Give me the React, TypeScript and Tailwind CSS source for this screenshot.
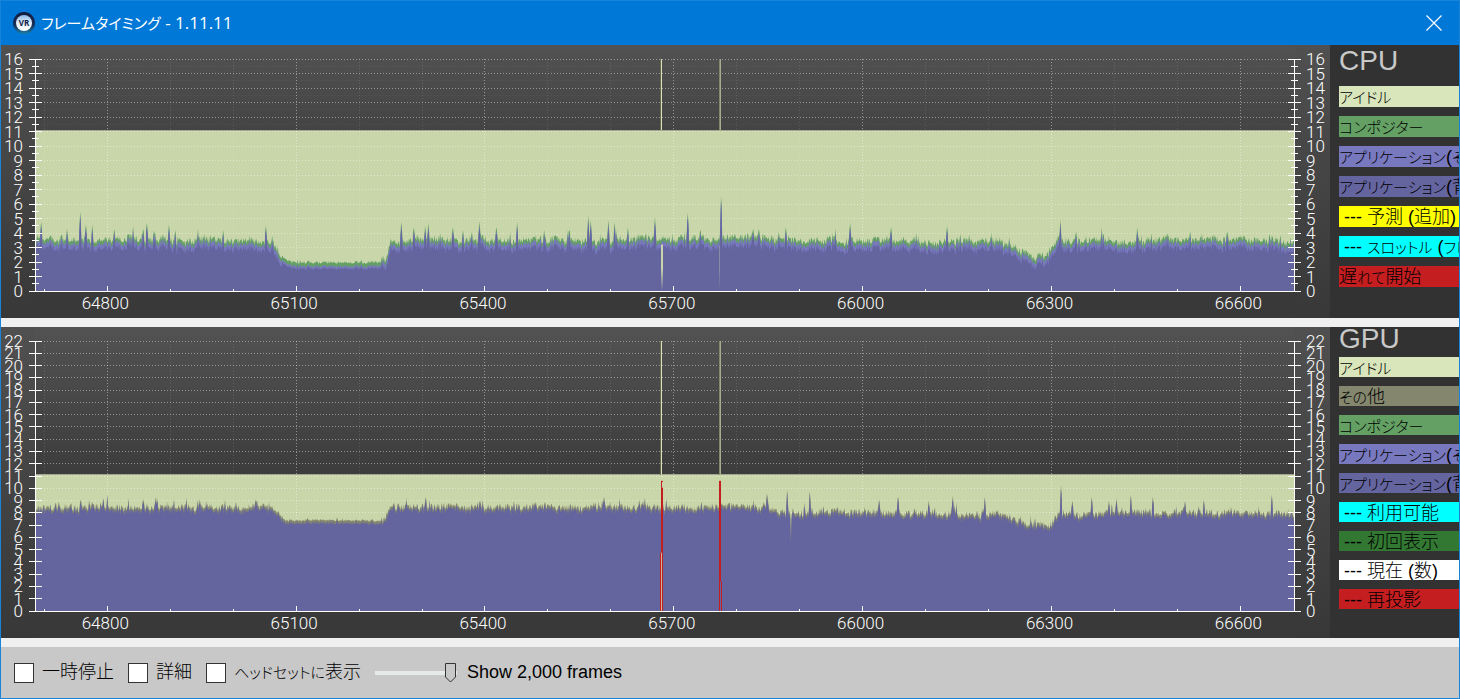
import { useEffect, useRef, useState } from "react";

type Point = [number, number];

interface LegendItem {
  label: string;
  className: string;
}

interface Marker {
  frame: number;
  split: number;
}

interface ChartProps {
  id: string;
  title: string;
  max: number;
  top: number;
  bottom: number;
  minorTicks: boolean;
  layers: { color: string; values: number[] }[];
  markers?: Marker[];
  gaps?: { frame: number; from: number; width: number; opacity: number }[];
}

const FIRST_FRAME = 64686;
const FRAMES = 2000;
const BUDGET = 11.1;

const cpuBase: Point[] = [
  [0, 3.5], [376, 3.5], [388, 2.45], [400, 2.1], [410, 1.98], [545, 1.98], [556, 2.3], [564, 3.5],
  [1065, 3.5], [1130, 3.7], [1180, 3.5], [1250, 3.35], [1548, 3.35], [1565, 2.6], [1598, 2.3],
  [1612, 2.6], [1625, 3.4], [1750, 3.4], [1850, 3.55], [2000, 3.45],
];

const cpuSpikes: Point[] = [
  [9, 4.8], [50, 4.3], [71, 5.5], [80, 4.6], [90, 4.6], [125, 4.3], [171, 4.3], [177, 4.7], [188, 4.2],
  [212, 4.6], [222, 4.2], [298, 4.2], [366, 4.5], [581, 4.8], [601, 4.4], [619, 4.5], [624, 4.7],
  [663, 4.4], [679, 4.2], [705, 4.8], [732, 4.4], [765, 4.8], [808, 4.2], [848, 4.2], [878, 5.2],
  [882, 4.9], [910, 4.9], [920, 4.7], [941, 4.4], [984, 5.1], [1036, 5.4], [1056, 4.2], [1089, 6.6],
  [1140, 4.3], [1149, 4.3], [1192, 4.4], [1294, 4.7], [1359, 4.4], [1448, 4.5], [1628, 4.9],
  [1653, 4.1], [1750, 4.4], [1834, 4.1], [1893, 4.1],
];

const gpuBase: Point[] = [
  [0, 8.45], [378, 8.45], [395, 7.4], [552, 7.35], [565, 8.5], [1150, 8.45], [1162, 8.6], [1175, 8],
  [1530, 7.9], [1570, 7.15], [1612, 7.05], [1625, 7.9], [1850, 8], [2000, 7.9],
];

const gpuSpikes: Point[] = [
  [37, 8.9], [72, 9], [90, 8.9], [171, 9.1], [193, 9.2], [261, 9.1], [350, 9.1], [620, 9.3], [706, 9],
  [903, 9.3], [1162, 9.6], [1194, 9.9], [1200, 5.6], [1230, 9.8], [1340, 9.1], [1370, 9.3], [1419, 9],
  [1457, 9.4], [1508, 9.3], [1629, 10.3], [1647, 9], [1678, 9.3], [1705, 9], [1717, 9.2], [1740, 9.5],
  [1775, 9.3], [1826, 9], [1856, 9.1], [1964, 9.5],
];

function envelope(points: Point[], frame: number) {
  for (let i = 1; i < points.length; i++) {
    const [x0, y0] = points[i - 1];
    const [x1, y1] = points[i];
    if (frame <= x1) return y0 + ((y1 - y0) * (frame - x0)) / (x1 - x0);
  }
  return points[points.length - 1][1];
}

const isCalm = (frame: number) => frame > 392 && frame < 552;

function buildSeries(base: Point[], spikes: Point[], jitter: number, wander: number, quiet: number, seed: number) {
  let state = seed;
  const rand = () => {
    state = (state * 1664525 + 1013904223) % 4294967296;
    return state / 4294967296;
  };
  const values: number[] = [];
  let drift = 0;
  for (let i = 0; i <= FRAMES; i++) {
    drift = drift * 0.9 + (rand() - 0.5) * wander;
    const calm = isCalm(i) ? quiet : 1;
    const kick = rand() > 0.94 ? rand() * jitter * 1.3 : 0;
    values.push(envelope(base, i) + (drift + (rand() - 0.5) * jitter + kick) * calm);
  }
  spikes.forEach(([frame, value]) => {
    const isDrop = value < values[frame];
    values[frame] = value;
    if (isDrop) return;
    values[frame + 1] = (value * 2 + values[frame + 1]) / 3;
    values[frame - 1] = (value + values[frame - 1]) / 2;
  });
  return values;
}

const cpuTotal = buildSeries(cpuBase, cpuSpikes, 0.5, 0.16, 0.4, 7);
const cpuApp = cpuTotal.map((v, i) => v - 0.3 + (i % 3) * 0.04);
const cpuScene = cpuTotal.map((v, i) => (v > 4 || isCalm(i) ? v - 0.42 : v - 0.52 - (i % 2) * 0.12));
const gpuTotal = buildSeries(gpuBase, gpuSpikes, 0.6, 0.1, 0.3, 21);
const gpuScene = gpuTotal.map((v, i) => v - 0.14 - (i % 2) * 0.2);

const cpuLegend: LegendItem[] = [
  { label: "アイドル", className: "bg-[#d9e6bb]" },
  { label: "コンポジター", className: "bg-[#64a064]" },
  { label: "アプリケーション(その他)", className: "bg-[#7878be]" },
  { label: "アプリケーション(背景)", className: "bg-[#64649f]" },
  { label: " --- 予測 (追加)", className: "bg-[#ffff00]" },
  { label: " --- スロットル (フレーム)", className: "bg-[#00ffff]" },
  { label: "遅れて開始", className: "bg-[#c41e20]" },
];

const gpuLegend: LegendItem[] = [
  { label: "アイドル", className: "bg-[#d9e6bb]" },
  { label: "その他", className: "bg-[#84876e]" },
  { label: "コンポジター", className: "bg-[#64a064]" },
  { label: "アプリケーション(その他)", className: "bg-[#7878be]" },
  { label: "アプリケーション(背景)", className: "bg-[#64649f]" },
  { label: " --- 利用可能", className: "bg-[#00ffff]" },
  { label: " --- 初回表示", className: "bg-[#327832]" },
  { label: " --- 現在 (数)", className: "bg-white" },
  { label: " --- 再投影", className: "bg-[#c41e20]" },
];

// kana are set smaller than kanji and latin
function Label({ text }: { text: string }) {
  return (
    <>
      {text.split(/([\u3040-\u30ff]+)/).map((part, i) =>
        i % 2 ? <span key={i} className="text-[15px]">{part}</span> : part
      )}
    </>
  );
}

function Chart({ id, title, max, top, bottom, minorTicks, layers, markers = [], gaps = [] }: ChartProps) {
  const ref = useRef<HTMLDivElement>(null);
  const [width, setWidth] = useState(1329);

  useEffect(() => {
    const el = ref.current;
    if (!el) return;
    const observer = new ResizeObserver(() => setWidth(el.clientWidth));
    observer.observe(el);
    return () => observer.disconnect();
  }, []);

  const height = bottom + 27;
  const left = 34;
  const right = width - 35;
  const x = (offset: number) => left + 0.5 + (offset * (right - left - 1)) / FRAMES;
  const y = (value: number) => bottom - (value * (bottom - top)) / max;
  const snap = (n: number) => Math.floor(n) + 0.5;

  const rows = Array.from({ length: max + 1 }, (_, i) => i);
  const halves = minorTicks ? rows.slice(0, -1).map((i) => i + 0.5) : [];
  const columns: number[] = [];
  for (let f = 64700; f <= FIRST_FRAME + FRAMES; f += 100) columns.push(f);
  const isMajor = (f: number) => f % 300 === 0;

  const area = (values: number[]) =>
    `M${x(0)} ${bottom}` + values.map((v, i) => `L${x(i).toFixed(2)} ${y(v).toFixed(2)}`).join("") + `L${x(FRAMES)} ${bottom}Z`;

  return (
    <div ref={ref} className="min-w-0 flex-1 overflow-hidden">
      <svg width={width} height={height} className="block" role="img" aria-label={title}>
        <defs>
          <linearGradient id={`${id}-bg`} x1="0" y1="0" x2="0" y2="1">
            <stop offset="0" stopColor="#525252" />
            <stop offset="0.5" stopColor="#3b3b3b" />
            <stop offset="1" stopColor="#393939" />
          </linearGradient>
          <linearGradient id={`${id}-side`} x1="0" y1="0" x2="0" y2="1">
            <stop offset="0" stopColor="#505050" />
            <stop offset="1" stopColor="#383838" />
          </linearGradient>
          <linearGradient id={`${id}-gap`} x1="0" y1="0" x2="0" y2="1">
            <stop offset="0" stopColor="#c9d6aa" />
            <stop offset="0.5" stopColor="#c9d6aa" />
            <stop offset="1" stopColor="#64649f" />
          </linearGradient>
        </defs>
        <rect width={width} height={height} fill={`url(#${id}-side)`} />
        <rect x={left} width={right - left} height={height} fill={`url(#${id}-bg)`} />

        <rect x={left} y={Math.round(y(BUDGET))} width={right - left} height={bottom - Math.round(y(BUDGET))} fill="#c9d6aa" />
        <path d={`M${left} ${snap(y(BUDGET))}H${right}`} stroke="#a3a590" />

        <g stroke="#ffffff" strokeDasharray="1 2">
          {rows.slice(1).map((v) => (
            <path key={v} d={`M${left} ${snap(y(v))}H${right}`} strokeOpacity="0.42" />
          ))}
          {halves.map((v) => (
            <path key={v} d={`M${left} ${snap(y(v))}H${right}`} strokeOpacity="0.06" />
          ))}
          {columns.map((f) => (
            <path
              key={f}
              d={`M${snap(x(f - FIRST_FRAME))} ${top}V${bottom}`}
              strokeOpacity={isMajor(f) ? 0.42 : 0.12}
            />
          ))}
        </g>

        {layers.map((layer) => (
          <path key={layer.color} d={area(layer.values)} fill={layer.color} />
        ))}

        {/* dropped frames */}
        {[993, 1087].map((f, i) => (
          <g key={f}>
            <rect x={Math.round(x(f)) - 1} y={top} width="1" height={y(BUDGET) - top} fill={i ? "#85876c" : "#66674f"} />
            <rect x={Math.round(x(f))} y={top} width="1" height={y(BUDGET) - top} fill={i ? "#a9ab90" : "#d9dfbb"} />
          </g>
        ))}
        {gaps.map((g) => (
          <rect
            key={g.frame}
            x={Math.round(x(g.frame))}
            y={y(g.from)}
            width={g.width}
            height={bottom - y(g.from)}
            fill={`url(#${id}-gap)`}
            opacity={g.opacity}
          />
        ))}
        {markers.map((m, i) => {
          const mx = Math.round(x(m.frame));
          return (
            <g key={m.frame} fill="#c41e20">
              <rect x={mx} y={y(10.6)} width={i ? 2 : 1} height="7" />
              <rect x={mx} y={y(10.6)} width="2" height="1" />
              <rect x={mx} y={y(10.05)} width="2" height={y(m.split) - y(10.05)} />
              {i === 0 && <rect x={mx} y={y(m.split)} width="1" height={bottom - y(m.split)} fill="#c9b79a" />}
              <rect x={i ? mx : mx - 1} y={y(m.split)} width="1" height={bottom - y(m.split)} />
              <rect x={i ? mx + 2 : mx + 1} y={y(m.split)} width="1" height={bottom - y(m.split)} />
            </g>
          );
        })}

        <g stroke="#ffffff">
          <path d={`M${left + 0.5} ${top}V${bottom}M${right - 0.5} ${top}V${bottom}M${left - 6} ${bottom + 0.5}H${right + 6}`} />
          {rows.map((v) => (
            <path key={v} d={`M${left - 6} ${snap(y(v))}h13M${right - 7} ${snap(y(v))}h13`} />
          ))}
          {halves.map((v) => (
            <path key={v} d={`M${left - 3} ${snap(y(v))}h7M${right - 4} ${snap(y(v))}h7`} />
          ))}
          {columns.map((f) => (
            <path key={f} d={`M${snap(x(f - FIRST_FRAME))} ${bottom}v${isMajor(f) ? -5 : -2}`} />
          ))}
        </g>

        <g className="fill-white font-['Roboto'] text-[17px] font-light">
          {rows.map((v) => (
            <g key={v}>
              <text x={22} y={y(v) + 6} textAnchor="end">{v}</text>
              <text x={right + 11} y={y(v) + 6}>{v}</text>
            </g>
          ))}
          {columns.filter(isMajor).map((f) => (
            <text key={f} x={x(f - FIRST_FRAME) - 2} y={bottom + 18} textAnchor="middle">{f}</text>
          ))}
        </g>
      </svg>
    </div>
  );
}

function Legend({ items, compact }: { items: LegendItem[]; compact?: boolean }) {
  return (
    <ul className="flex flex-col gap-[9px] text-[18px] text-black">
      {items.map((item) => (
        <li
          key={item.label}
          className={`overflow-hidden whitespace-pre font-light ${compact ? "h-5 leading-[22px]" : "h-[21px] leading-[22px]"} ${item.className}`}
        >
          <Label text={item.label} />
        </li>
      ))}
    </ul>
  );
}

function CheckOption({ id, label }: { id: string; label: string }) {
  return (
    <div className="flex items-center gap-2">
      <input
        id={id}
        type="checkbox"
        className="size-5 appearance-none border border-[#333333] bg-white checked:bg-[#333333]"
      />
      <label htmlFor={id} className="font-light">
        <Label text={label} />
      </label>
    </div>
  );
}

export default function App() {
  const [frames, setFrames] = useState(2000);

  return (
    <div className="flex min-h-screen flex-col overflow-hidden border border-[#1883d7] bg-[#f0f0f0] font-['Liberation_Sans','Noto_Sans_CJK_JP',sans-serif] [font-feature-settings:'palt']">
      <header className="flex h-11 items-center bg-[#0078d7] pl-3 text-white">
        <svg width="22" height="22" viewBox="0 0 22 22" aria-hidden="true">
          <defs>
            <linearGradient id="ring" x1="0" y1="0" x2="0" y2="1">
              <stop offset="0" stopColor="#14193a" />
              <stop offset="0.6" stopColor="#16305a" />
              <stop offset="1" stopColor="#1a7fa8" />
            </linearGradient>
            <linearGradient id="lens" x1="0" y1="0" x2="0" y2="1">
              <stop offset="0" stopColor="#8ab8e6" />
              <stop offset="0.5" stopColor="#e3effa" />
              <stop offset="1" stopColor="#ffffff" />
            </linearGradient>
          </defs>
          <circle cx="11" cy="11" r="11" fill="url(#ring)" />
          <circle cx="11" cy="11" r="8" fill="url(#lens)" />
          <text x="11" y="14" textAnchor="middle" className="fill-[#14254a] font-['Open_Sans'] text-[8px] font-bold">VR</text>
        </svg>
        <h1 className="ml-[6px] flex-1 font-['Open_Sans','Noto_Sans_CJK_JP',sans-serif] text-[17px]">
          <Label text="フレームタイミング - 1.11.11" />
        </h1>
        <button type="button" aria-label="閉じる" className="flex h-11 w-[50px] items-center justify-center">
          <svg width="16" height="16" viewBox="0 0 16 16" stroke="white" strokeWidth="1.2" aria-hidden="true">
            <path d="M0.5 0.5L15.5 15.5M15.5 0.5L0.5 15.5" />
          </svg>
        </button>
      </header>

      <main className="flex flex-col gap-[9px]">
        <section className="flex bg-[#323232]">
          <Chart
            id="cpu"
            title="CPU"
            max={16}
            top={14}
            bottom={246}
            minorTicks
            layers={[
              { color: "#64a064", values: cpuTotal },
              { color: "#7878be", values: cpuApp },
              { color: "#64649f", values: cpuScene },
            ]}
            gaps={[
              { frame: 993, from: 3.2, width: 2, opacity: 1 },
              { frame: 1085, from: 3.1, width: 1, opacity: 0.35 },
            ]}
          />
          <aside className="w-[129px] pl-[9px]">
            <h2 className="h-[41px] text-[28px] leading-8 text-[#c8c8c8]">CPU</h2>
            <Legend items={cpuLegend} />
          </aside>
        </section>

        <section className="flex bg-[#323232]">
          <Chart
            id="gpu"
            title="GPU"
            max={22}
            top={14}
            bottom={284}
            minorTicks={false}
            layers={[
              { color: "#84876e", values: gpuTotal },
              { color: "#64649f", values: gpuScene },
            ]}
            markers={[
              { frame: 993, split: 4.75 },
              { frame: 1085, split: 2.4 },
            ]}
          />
          <aside className="w-[129px] pl-[9px]">
            <h2 className="h-[30px] text-[28px] leading-6 text-[#c8c8c8]">GPU</h2>
            <Legend items={gpuLegend} compact />
          </aside>
        </section>
      </main>

      <footer className="mt-[9px] flex flex-1 items-center gap-[14px] bg-[#c8c8c8] pl-[13px] text-[18px] text-black">
        <CheckOption id="pause" label="一時停止" />
        <CheckOption id="details" label="詳細" />
        <CheckOption id="headset" label="ヘッドセットに表示" />
        <div className="flex items-center gap-[10px]">
          <div className="relative h-5 w-[82px]">
            <div className="mt-2 h-1 bg-[#e7eaea]" />
            <svg
              width="12"
              height="20"
              viewBox="0 0 12 20"
              className="absolute top-0"
              style={{ left: ((frames - 100) / 1900) * 70 }}
              aria-hidden="true"
            >
              <path d="M0.5 0.5H10.5V14L5.5 19L0.5 14Z" fill="#c8c8c8" stroke="#333333" />
            </svg>
            <input
              id="frames"
              type="range"
              min={100}
              max={2000}
              value={frames}
              onChange={(e) => setFrames(Number(e.target.value))}
              className="absolute inset-0 h-5 w-full opacity-0"
            />
          </div>
          <label htmlFor="frames">Show {frames.toLocaleString("en-US")} frames</label>
        </div>
      </footer>
    </div>
  );
}
